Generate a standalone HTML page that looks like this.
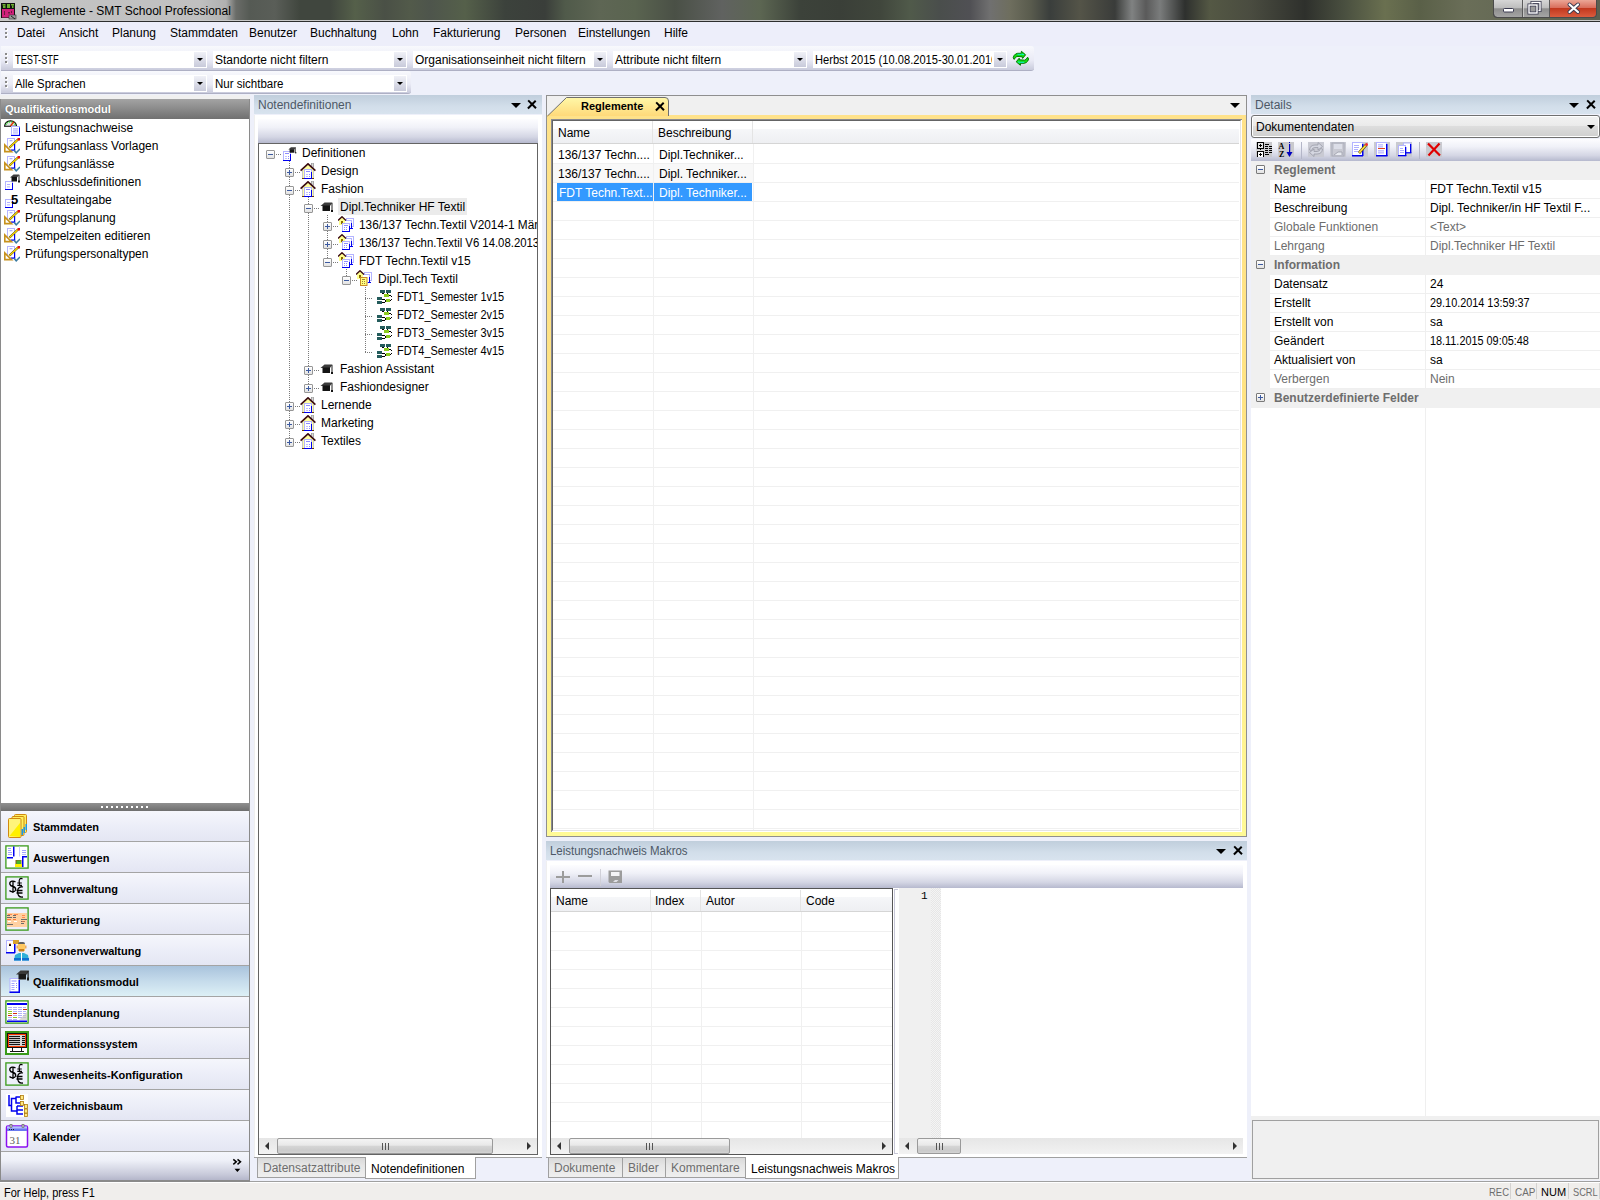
<!DOCTYPE html>
<html><head><meta charset="utf-8">
<style>
*{box-sizing:border-box;margin:0;padding:0}
html,body{width:1600px;height:1200px;overflow:hidden;background:#EEF0FA;font-family:"Liberation Sans",sans-serif;font-size:12px;color:#000}
.a{position:absolute}
.t{position:absolute;white-space:nowrap;line-height:14px}
.b{font-weight:bold}
.fx{transform-origin:0 0}
/* title */
#title{left:0;top:0;width:1600px;height:22px;background:linear-gradient(90deg,#c4c4c4 0px,#c0c0c0 200px,#b0b0b0 226px,#6a6c68 236px,#555a54 250px,#5a5e58 275px,#40463e 300px,#40463e 330px,#55604a 355px,#4a5046 385px,#525a4a 410px,#4e554c 430px,#55604a 465px,#3c423c 505px,#3a3e3a 545px,#505a4a 565px,#5e6654 600px,#5a6450 635px,#4a5046 675px,#606260 722px,#5c6652 760px,#3c423a 800px,#3a3f38 840px,#40463c 880px,#505a4a 910px,#4a4e4c 940px,#505054 970px,#707070 990px,#6e6e5e 1010px,#5a5c4e 1030px,#3a3e3c 1050px,#545448 1080px,#3a3c3a 1115px,#808282 1132px,#5a5a5a 1146px,#7a7c7c 1160px,#2e302e 1185px,#545844 1210px,#4a4c40 1250px,#2e302c 1305px,#4a5040 1345px,#6a7050 1385px,#5a6048 1420px,#6a6e58 1465px,#5a6050 1600px)}
#menu{left:0;top:22px;width:1600px;height:24px;background:#EDEEFA}
.grip{position:absolute;width:3px}
.grip i{display:block;width:2px;height:2px;background:#8a8a8a;margin-bottom:2px;box-shadow:1px 1px 0 #fff}
.tb{position:absolute;border-radius:0 3px 3px 0;background:linear-gradient(#F8F9FD,#E9EAF5 60%,#C9CBDC);border-bottom:1px solid #AEB0C4}
.combo{position:absolute;height:17px;background:#fff}
.combo .t{top:2px;left:2px}
.dd{position:absolute;right:1px;top:1px;width:12px;height:15px;background:linear-gradient(#F0F1F7,#C8CADA)}
.dd:after{content:"";position:absolute;left:3px;top:6px;border-left:3px solid transparent;border-right:3px solid transparent;border-top:3px solid #000}
.phdr{position:absolute;height:19px;background:linear-gradient(#C0CEDC,#D2DEEA 60%,#D8E3EE)}
.phdr .t{left:4px;top:3px;color:#4D5866}
.ptri{position:absolute;top:8px;border-left:5px solid transparent;border-right:5px solid transparent;border-top:5px solid #000}
.px{position:absolute;top:5px;width:9px;height:9px}
.px:before,.px:after{content:"";position:absolute;left:3.7px;top:-0.8px;width:1.6px;height:10.6px;background:#000;transform:rotate(45deg)}
.px:after{transform:rotate(-45deg)}
.ptb{position:absolute;background:linear-gradient(#FDFDFF,#F0F1F8 35%,#D4D6E4 75%,#B6B9CE)}
.box{position:absolute;background:#fff;border:1px solid #646464}
.hsb{position:absolute;height:16px;background:linear-gradient(#E6E6E6,#F2F2F2)}
.thumb{position:absolute;top:0;height:16px;border:1px solid #9A9A9A;border-radius:2px;background:linear-gradient(#F4F4F4,#E8E8E8 45%,#D6D6D6 50%,#CACACA 85%,#D4D4D4)}
.grip3{position:absolute;top:4px;width:7px;height:7px;border-left:1px solid #555;border-right:1px solid #555}
.grip3:after{content:"";position:absolute;left:2px;top:0;width:1px;height:7px;background:#555}
.la{position:absolute;top:4px;border-top:4px solid transparent;border-bottom:4px solid transparent;border-right:4px solid #333}
.ra{position:absolute;top:4px;border-top:4px solid transparent;border-bottom:4px solid transparent;border-left:4px solid #333}
.tab{position:absolute;height:20px;border:1px solid #A0A0A0;border-top:none;background:linear-gradient(#D9D9D9,#E6E6E6 40%,#EFEFEF);color:#6D6D6D}
.tab .t{top:3px;left:5px}
.tab.act{background:#fff;color:#000;height:22px}
.nav{position:absolute;left:1px;width:248px;height:31px;border-bottom:1px solid #A4A4A4;background:linear-gradient(#F5F6FC,#ECEEF8 50%,#E4E6F3)}
.nav .t{left:32px;top:9px;font-size:11px;font-weight:bold}
.nav.sel{background:linear-gradient(#A9C3DC,#C5DBEB 50%,#DDF0F6)}
.li{position:absolute;left:25px;height:18px}
.gline{position:absolute;background:#E8E8E8}
.exp{position:absolute;width:9px;height:9px;border:1px solid #969696;border-radius:1px;background:linear-gradient(#fff,#E2E2E2)}
.exp:before{content:"";position:absolute;left:1px;top:3px;width:5px;height:1px;background:#3C5AA0}
.exp.p:after{content:"";position:absolute;left:3px;top:1px;width:1px;height:5px;background:#3C5AA0}
.dot{position:absolute;border-color:#A0A0A0;border-style:dotted;border-width:0}
.prow{position:absolute;left:1270px;width:330px;height:19px;border-bottom:1px solid #EFEFEF;background:#fff}
.prow .n{position:absolute;left:4px;top:2px;white-space:nowrap}
.prow .v{position:absolute;left:160px;top:2px;white-space:nowrap}
.prow .d{color:#6D6D6D}
.pcat{position:absolute;left:1251px;width:349px;height:19px;background:#F0F0F0}
.pcat .t{left:23px;top:2px;color:#6D6D6D;font-weight:bold}
.pcat .exp{left:5px;top:4px;border-color:#7A7A7A}
</style></head><body><svg width="0" height="0" style="position:absolute"><defs>
<symbol id="house" viewBox="0 0 16 17">
 <polygon points="2,7 8,1.3 14,7 14,16 2,16" fill="#FFFFA0"/>
 <rect x="2" y="7" width="1" height="9" fill="#C8C8C8"/><rect x="13" y="7" width="1" height="9" fill="#C8C8C8"/>
 <rect x="11.5" y="0" width="2" height="4.5" fill="#D8D8D8" stroke="#8C8C8C" stroke-width="0.7"/>
 <polyline points="0.6,7.6 8,0.8 15.4,7.6" fill="none" stroke="#3A0A10" stroke-width="1.6"/>
 <rect x="2" y="15" width="2" height="1" fill="#6A3A00"/><rect x="12" y="15" width="2" height="1" fill="#6A3A00"/>
 <rect x="4.5" y="6.5" width="7" height="9" fill="#fff" stroke="#B4B4FF" stroke-width="1"/>
 <rect x="11" y="9" width="1" height="7" fill="#0000F0"/><rect x="4" y="15" width="8" height="1" fill="#0000F0"/>
 <rect x="6" y="8" width="4" height="1" fill="#8C8CFF"/><rect x="6" y="11" width="2" height="1" fill="#C0C0FF"/><rect x="9" y="11" width="1" height="1" fill="#8C8CFF"/>
 <rect x="6" y="13" width="2" height="1" fill="#C0C0FF"/><rect x="9" y="13" width="1" height="1" fill="#8C8CFF"/>
</symbol>
<symbol id="cap" viewBox="0 0 14 11">
 <path d="M0.5 4 L4.5 0.5 L12.5 0.5 L10 4 Z" fill="#3C3C3C"/>
 <rect x="2.5" y="3.5" width="7.5" height="5.5" fill="#141414"/>
 <rect x="11.5" y="1" width="1" height="7" fill="#1E1E1E"/><rect x="11" y="8" width="2" height="2" fill="#141414"/>
</symbol>
<symbol id="doc" viewBox="0 0 9 11">
 <rect x="0.5" y="0.5" width="7" height="9" fill="#fff" stroke="#B4B4FF" stroke-width="1"/>
 <rect x="7" y="3" width="1" height="7" fill="#0000F0"/><rect x="0" y="9" width="8" height="1" fill="#0000F0"/>
 <rect x="2" y="2" width="4" height="1" fill="#8C8CFF"/><rect x="2" y="5" width="2" height="1" fill="#C0C0FF"/><rect x="5" y="5" width="1" height="1" fill="#8C8CFF"/>
 <rect x="2" y="7" width="2" height="1" fill="#C0C0FF"/><rect x="5" y="7" width="1" height="1" fill="#8C8CFF"/>
</symbol>
<symbol id="multi" viewBox="0 0 17 17">
 <rect x="8.5" y="2.5" width="7" height="8" fill="#fff" stroke="#B4B4FF"/>
 <rect x="6.5" y="4.5" width="7" height="8" fill="#fff" stroke="#B4B4FF"/>
 <rect x="13" y="7" width="1" height="5" fill="#0000F0"/><rect x="11" y="12" width="4" height="1" fill="#0000F0"/>
 <polygon points="1,4 4,1 7,4 7,9 1,9" fill="#FFFF90"/>
 <polyline points="0,4.5 4,0.7 8,4.5" fill="none" stroke="#3A0A10" stroke-width="1.3"/>
 <rect x="3" y="5" width="2" height="3" fill="#8A6A00"/>
 <rect x="4.5" y="7.5" width="7" height="8" fill="#fff" stroke="#B4B4FF"/>
 <rect x="11" y="10" width="1" height="6" fill="#0000F0"/><rect x="4" y="15" width="8" height="1" fill="#0000F0"/>
 <rect x="6" y="9" width="4" height="1" fill="#8C8CFF"/><rect x="6" y="11" width="1" height="1" fill="#8C8CFF"/><rect x="8" y="11" width="1" height="1" fill="#8C8CFF"/>
 <rect x="6" y="13" width="1" height="1" fill="#8C8CFF"/><rect x="8" y="13" width="1" height="1" fill="#8C8CFF"/>
</symbol>
<symbol id="ydoc" viewBox="0 0 17 17">
 <rect x="8.5" y="2.5" width="7" height="8" fill="#fff" stroke="#B4B4FF"/>
 <rect x="6.5" y="4.5" width="7" height="8" fill="#fff" stroke="#B4B4FF"/>
 <rect x="13" y="7" width="1" height="5" fill="#0000F0"/><rect x="12" y="12" width="3" height="1" fill="#0000F0"/>
 <polygon points="1,4 4,1 7,4 7,9 1,9" fill="#FFFF90"/>
 <polyline points="0,4.5 4,0.7 8,4.5" fill="none" stroke="#3A0A10" stroke-width="1.3"/>
 <rect x="3" y="5" width="2" height="3" fill="#8A6A00"/>
 <rect x="4.5" y="7.5" width="6.5" height="8" fill="#FFFF80" stroke="#C88A28"/>
 <rect x="6" y="9" width="3" height="1" fill="#A08040"/><rect x="6" y="11" width="1" height="1" fill="#A08040"/><rect x="8" y="11" width="1" height="1" fill="#A08040"/>
 <rect x="6" y="13" width="1" height="1" fill="#A08040"/><rect x="8" y="13" width="1" height="1" fill="#A08040"/>
</symbol>
<symbol id="gtree" viewBox="0 0 16 15" shape-rendering="crispEdges">
 <rect x="3" y="0" width="5" height="3" fill="#235B5B"/><rect x="9" y="0" width="5" height="3" fill="#235B5B"/>
 <rect x="5" y="3" width="2" height="1" fill="#000"/><rect x="10" y="3" width="1" height="1" fill="#000"/>
 <rect x="7" y="4" width="5" height="3" fill="#8CCC1E"/>
 <rect x="12" y="5" width="2" height="1" fill="#000"/><rect x="14" y="6" width="1" height="1" fill="#000"/>
 <rect x="0" y="7" width="5" height="3" fill="#235B5B"/>
 <rect x="5" y="9" width="3" height="1" fill="#000"/><rect x="8" y="10" width="1" height="2" fill="#000"/>
 <rect x="9" y="9" width="4" height="3" fill="#8CCC1E"/>
 <rect x="13" y="10" width="1" height="1" fill="#000"/><rect x="14" y="9" width="1" height="1" fill="#000"/>
 <rect x="0" y="11" width="5" height="3" fill="#235B5B"/><rect x="5" y="12" width="3" height="1" fill="#000"/>
</symbol>

<symbol id="gauge" viewBox="0 0 16 16">
 <path d="M0.6 6.3 Q1 1 6.5 0.7 Q12 1 12.6 6.3 Z" fill="#E4E4E4" stroke="#000" stroke-width="1.1"/>
 <path d="M1.8 5 Q2.5 2 6.5 1.8 Q10.5 2 11.3 5" fill="none" stroke="#10D010" stroke-width="1.1" stroke-dasharray="1.2 1"/>
 <path d="M6.5 6 L9.8 1.8" stroke="#E03000" stroke-width="1.4"/>
 <rect x="7.5" y="6.5" width="8" height="8.5" fill="#fff" stroke="#B4B4FF"/>
 <rect x="15" y="7.5" width="1" height="8.5" fill="#0000F0"/><rect x="7" y="15" width="9" height="1" fill="#0000F0"/>
 <rect x="9" y="8.5" width="5" height="0.9" fill="#9C9CFF"/><rect x="9" y="10.5" width="5" height="0.9" fill="#9C9CFF"/><rect x="9" y="12.5" width="5" height="0.9" fill="#9C9CFF"/>
</symbol>
<symbol id="ruler" viewBox="0 0 16 16">
 <rect x="3.5" y="0.5" width="7" height="11.5" fill="#fff" stroke="#B4B4FF"/>
 <rect x="10" y="6" width="1.2" height="6.5" fill="#0000F0"/><rect x="7" y="11.5" width="4.2" height="1.2" fill="#0000F0"/>
 <rect x="5.5" y="2.3" width="3" height="0.9" fill="#8C8CFF"/>
 <polygon points="0,5 0,14.5 9.5,14.5" fill="#C8921E"/>
 <polygon points="1.6,9 1.6,12.8 5.4,12.8" fill="#fff"/>
 <path d="M5.5 9.5 L14 1.5" stroke="#4A3A10" stroke-width="2.2"/><path d="M5.8 9.2 L14 1.5" stroke="#FFE000" stroke-width="1.2"/>
 <rect x="13.5" y="0" width="2.5" height="2.5" fill="#E01010"/>
 <path d="M10 12.3 L12.2 14.8 L16 11" fill="none" stroke="#3A7AA0" stroke-width="1.5"/>
</symbol>
<symbol id="defcap" viewBox="0 0 16 16">
 <rect x="1.5" y="7.5" width="7" height="8" fill="#fff" stroke="#B4B4FF"/>
 <rect x="8" y="9" width="1" height="7" fill="#0000F0"/><rect x="1" y="15" width="8" height="1" fill="#0000F0"/>
 <rect x="3" y="10" width="3" height="0.8" fill="#9C9CFF"/><rect x="3" y="12.5" width="3" height="0.8" fill="#9C9CFF"/>
 <path d="M6 3.5 L9.5 0.5 L15.5 0.5 L13 3.5 Z" fill="#3C3C3C"/>
 <rect x="7.5" y="3" width="5.5" height="4.5" fill="#141414"/>
 <rect x="14.5" y="1" width="1" height="6" fill="#1E1E1E"/><rect x="14" y="6.5" width="2" height="2" fill="#141414"/>
</symbol>
<symbol id="five" viewBox="0 0 16 16">
 <rect x="1.5" y="7.5" width="7" height="8" fill="#fff" stroke="#B4B4FF"/>
 <rect x="8" y="9" width="1" height="7" fill="#0000F0"/><rect x="1" y="15" width="8" height="1" fill="#0000F0"/>
 <rect x="3" y="10" width="3" height="0.8" fill="#9C9CFF"/><rect x="3" y="12.5" width="3" height="0.8" fill="#9C9CFF"/>
 <text x="7" y="12" font-family="Liberation Sans" font-weight="bold" font-size="13" fill="#000">5</text>
</symbol>
<symbol id="nfold" viewBox="0 0 24 24">
 <rect x="9.5" y="0.5" width="12" height="18" rx="1" fill="#FFF060" stroke="#D08A10"/>
 <rect x="7" y="2.5" width="12" height="19" rx="1" fill="#FFF060" stroke="#D08A10"/>
 <rect x="3.5" y="4.5" width="12.5" height="19" rx="1" fill="#FFF47A" stroke="#D08A10"/>
 <path d="M4.5 22 L15 9 L15 23 Z" fill="#FFF000"/>
 <rect x="16.5" y="15" width="1.5" height="6" fill="#1E96E6"/><rect x="18.5" y="13" width="1.5" height="6" fill="#1E96E6"/><rect x="20.5" y="10" width="1.5" height="6" fill="#1E96E6"/>
</symbol>
<symbol id="nausw" viewBox="0 0 24 24">
 <rect x="0.9" y="0.9" width="22.2" height="22.2" fill="#fff" stroke="#3A9A1A" stroke-width="1.3"/>
 <rect x="8" y="1.5" width="1.5" height="10" fill="#0000F0"/><rect x="2" y="12" width="6" height="1.5" fill="#0000F0"/>
 <rect x="17" y="11" width="5" height="1.5" fill="#0000F0"/><rect x="17" y="12" width="1.5" height="10" fill="#0000F0"/>
 <rect x="14" y="1.5" width="1" height="10" fill="#C8C8FF"/>
 <rect x="3" y="3" width="3" height="0.8" fill="#8C8CFF"/><rect x="3" y="5" width="3" height="0.8" fill="#8C8CFF"/><rect x="3" y="7" width="4" height="0.8" fill="#8C8CFF"/><rect x="3" y="9" width="4" height="0.8" fill="#8C8CFF"/>
 <rect x="17" y="5" width="4" height="0.8" fill="#8C8CFF"/><rect x="17" y="7" width="4" height="0.8" fill="#8C8CFF"/><rect x="17" y="9" width="4" height="0.8" fill="#B0B0FF"/>
 <rect x="10.5" y="15" width="6" height="6" fill="#8A5A1E"/><rect x="11.5" y="15.5" width="4.5" height="3.5" fill="#48B428"/>
 <rect x="10" y="19" width="7" height="3" fill="#FFF000"/>
</symbol>
<symbol id="nlohn" viewBox="0 0 24 24">
 <rect x="0.9" y="0.9" width="22.2" height="22.2" fill="#EEF0FA" stroke="#3A9A1A" stroke-width="1.3"/>
 <path d="M8 4.5 L8 17 M10.5 6 Q9 4.8 7 5.2 Q4.5 5.8 4.8 8 Q5.2 10 8 10.5 Q11 11.3 10.6 13.8 Q10 16 7.5 15.8 Q5.5 15.7 4.5 14.5" fill="none" stroke="#000" stroke-width="1.3"/>
 <path d="M17.5 3 Q16 1.8 14.8 3 Q14 4 14.2 6 L14.5 9 M12.3 7 L16.8 7 M12.3 9.3 L17 9.3" fill="none" stroke="#000" stroke-width="1.2"/>
 <path d="M18 11 Q14.5 10 13 13 Q12 17 13.5 19.5 Q15 21.5 18 21 M11.5 14.5 L17.5 14.5 M11.5 17 L17.5 17" fill="none" stroke="#000" stroke-width="1.3"/>
</symbol>
<symbol id="nfakt" viewBox="0 0 24 24">
 <rect x="0.9" y="0.9" width="22.2" height="22.2" fill="#EEF0FA" stroke="#3A9A1A" stroke-width="1.3"/>
 <rect x="2" y="6" width="20" height="14" fill="#FFD0A0"/>
 <g fill="#6A6A6A"><rect x="2" y="8" width="3" height="1"/><rect x="2" y="10" width="5" height="1"/><rect x="8" y="8" width="3" height="1"/><rect x="8" y="10" width="3" height="1"/><rect x="16" y="12" width="6" height="1"/><rect x="2" y="17" width="6" height="1"/><rect x="16" y="14" width="4" height="1"/><rect x="16" y="16" width="3" height="1"/></g>
 <g fill="#FF7A3A"><rect x="3" y="7" width="4" height="0.8"/><rect x="9" y="7" width="4" height="0.8"/><rect x="17" y="8" width="3" height="0.8"/><rect x="17" y="10" width="3" height="0.8"/><rect x="2" y="12" width="4" height="1"/><rect x="8" y="12" width="3" height="1"/><rect x="17" y="14" width="3" height="0.6"/></g>
 <g fill="#fff"><rect x="3" y="14" width="3" height="1"/><rect x="9" y="14" width="3" height="1"/></g>
</symbol>
<symbol id="npers" viewBox="0 0 24 24">
 <rect x="1.5" y="2.5" width="8" height="12" fill="#fff" stroke="#B4B4FF"/>
 <rect x="9" y="3" width="1.5" height="12" fill="#0000F0"/><rect x="1" y="14" width="9" height="1.5" fill="#0000F0"/>
 <rect x="8" y="2" width="6" height="4" fill="#D8A030"/><rect x="4" y="6" width="2" height="2" fill="#000"/><rect x="4" y="5.5" width="2" height="0.8" fill="#FF6030"/>
 <rect x="13" y="4" width="7" height="4" fill="#606060" rx="2"/>
 <rect x="13" y="6" width="7" height="7" fill="#FFC860"/><rect x="11.5" y="7.5" width="1.5" height="3" fill="#E8A860"/><rect x="20" y="7.5" width="1.5" height="3" fill="#E8A860"/>
 <rect x="14" y="11" width="5" height="2.5" fill="#C88020"/>
 <path d="M9 22.5 L10 17 L14 15 L19 15 L23 17 L24 22.5 Z" fill="#30B0D8"/>
 <rect x="9" y="20" width="15" height="2.5" fill="#1070D0"/><rect x="16" y="15" width="1" height="8" fill="#fff"/>
</symbol>
<symbol id="nqual" viewBox="0 0 24 24">
 <rect x="5" y="9.5" width="9.5" height="13.5" fill="#fff" stroke="#B4B4FF"/>
 <rect x="13.5" y="11" width="1.5" height="12.5" fill="#0000F0"/><rect x="4.5" y="22.5" width="10.5" height="1.5" fill="#0000F0"/>
 <g fill="#8C8CFF"><rect x="6.5" y="11.5" width="5" height="1"/><rect x="6.5" y="14" width="3" height="0.8"/><rect x="6.5" y="16" width="3" height="0.8"/><rect x="6.5" y="18" width="3" height="0.8"/><rect x="6.5" y="20" width="3" height="0.8"/><rect x="11" y="14" width="1" height="1"/><rect x="11" y="16" width="1" height="1"/><rect x="11" y="18" width="1" height="1"/></g>
 <path d="M11 5.5 L15.5 1.5 L24 1.5 L22 5.5 Z" fill="#3A3A3A"/>
 <rect x="13.5" y="5" width="7.5" height="5.5" fill="#1A1A1A"/>
 <rect x="22.5" y="2" width="1.2" height="8" fill="#1A1A1A"/><rect x="22" y="8.5" width="2" height="3" fill="#1A1A1A"/>
</symbol>
<symbol id="nstund" viewBox="0 0 24 24">
 <rect x="0.9" y="0.9" width="22.2" height="22.2" fill="#fff" stroke="#3A9A1A" stroke-width="1.3"/>
 <rect x="2" y="3" width="20" height="2" fill="#0000F0"/><rect x="2" y="20.5" width="20" height="1.5" fill="#0000F0"/>
 <g fill="#B0B0F8"><rect x="3" y="7" width="4" height="1"/><rect x="8" y="7" width="4" height="1"/><rect x="13" y="7" width="4" height="1"/><rect x="18" y="7" width="3" height="1"/><rect x="3" y="9" width="4" height="1"/><rect x="8" y="9" width="4" height="1"/><rect x="13" y="9" width="4" height="1"/><rect x="8" y="11" width="4" height="1"/><rect x="13" y="11" width="4" height="1"/><rect x="18" y="11" width="3" height="1"/><rect x="13" y="13" width="4" height="1"/><rect x="18" y="13" width="3" height="1"/><rect x="8" y="15" width="4" height="1"/><rect x="13" y="15" width="4" height="1"/><rect x="18" y="15" width="3" height="1"/><rect x="3" y="17" width="4" height="1"/><rect x="3" y="19" width="4" height="1"/><rect x="8" y="19" width="4" height="1"/><rect x="13" y="17" width="4" height="1"/><rect x="18" y="17" width="3" height="1"/></g>
 <g fill="#90C820"><rect x="3" y="11" width="4" height="1"/><rect x="3" y="13" width="4" height="1"/><rect x="8" y="17" width="4" height="1"/></g>
 <g fill="#D03010"><rect x="18" y="9" width="4" height="1"/><rect x="8" y="13" width="4" height="1"/><rect x="3" y="15" width="4" height="1"/></g>
 <path d="M14 20 L22 12 L22 20 Z" fill="#C8C8C0" opacity="0.7"/>
</symbol>
<symbol id="ninfo" viewBox="0 0 24 24" shape-rendering="crispEdges">
 <rect x="0.9" y="0.9" width="22.2" height="22.2" fill="#fff" stroke="#3A9A1A" stroke-width="1.3"/>
 <rect x="2" y="2" width="20" height="15" fill="#141414"/>
 <rect x="3" y="3" width="18" height="13" fill="#FF3A00"/>
 <rect x="4" y="4" width="16" height="11" fill="#C8C8C8"/>
 <g fill="#141414"><rect x="4" y="5" width="16" height="1"/><rect x="4" y="7" width="16" height="1"/><rect x="4" y="9" width="16" height="1"/><rect x="4" y="11" width="16" height="1"/><rect x="4" y="13" width="16" height="1"/></g>
 <rect x="15" y="4" width="2" height="11" fill="#D8D8D8"/>
 <rect x="7" y="17" width="1" height="4" fill="#141414"/><rect x="16" y="17" width="1" height="4" fill="#141414"/><rect x="5" y="20" width="14" height="1" fill="#141414"/>
</symbol>
<symbol id="nverz" viewBox="0 0 24 24">
 <rect x="1" y="1" width="22" height="23" fill="#fff"/>
 <path d="M4 2 L4 12.5 L7 12.5 M6.5 12 L6.5 5.5 L11 5.5 M11 3.5 L11 10 L15 10 M11 4 L15 4 M6.5 9 L6.5 18 L12 18 M12 13 L12 21 L18 21 M12 13 L18 13 M12 17 L18 17" fill="none" stroke="#0000F0" stroke-width="1.5"/>
 <g fill="#FFE880" stroke="#B07A10" stroke-width="0.8"><rect x="15.5" y="2.5" width="3" height="4"/><rect x="15.5" y="8.5" width="3" height="4"/><rect x="19.5" y="11.5" width="3" height="4"/><rect x="19.5" y="16" width="3" height="4"/><rect x="19.5" y="20.5" width="3" height="3"/></g>
</symbol>
<symbol id="nkal" viewBox="0 0 24 24">
 <rect x="1.5" y="2" width="21" height="21" rx="1.5" fill="#fff" stroke="#8A10F0" stroke-width="1.5"/>
 <rect x="2" y="2.5" width="20" height="4.5" fill="#6A7AF0"/><rect x="2" y="2.5" width="20" height="2" fill="#B8C0FF"/>
 <rect x="5" y="0.5" width="2" height="3" fill="#C8C8C8" stroke="#444" stroke-width="0.5"/><rect x="17" y="0.5" width="2" height="3" fill="#C8C8C8" stroke="#444" stroke-width="0.5"/>
 <g fill="#222"><rect x="4" y="5" width="1" height="1"/><rect x="6" y="5" width="1" height="1"/><rect x="8" y="5" width="1" height="1"/></g>
 <text x="4.5" y="19.5" font-family="Liberation Serif" font-size="11" fill="#606060">31</text>
</symbol>
<symbol id="tcat" viewBox="0 0 16 16" shape-rendering="crispEdges">
 <rect x="0" y="0" width="16" height="15" fill="#C9C9CD"/>
 <rect x="1" y="0" width="7" height="7" fill="#000"/><rect x="2" y="1" width="5" height="5" fill="#E4E4E4"/>
 <rect x="3" y="3" width="3" height="1" fill="#000"/><rect x="4" y="2" width="1" height="3" fill="#000"/>
 <rect x="4" y="7" width="1" height="2" fill="#000"/><rect x="0" y="8" width="9" height="1" fill="#DADADA"/>
 <rect x="1" y="9" width="7" height="6" fill="#000"/><rect x="2" y="10" width="5" height="5" fill="#fff"/>
 <rect x="3" y="12" width="3" height="1" fill="#000"/><rect x="4" y="11" width="1" height="3" fill="#000"/>
 <g fill="#000"><rect x="9" y="2" width="4" height="1"/><rect x="9" y="4" width="3" height="1"/><rect x="13" y="4" width="3" height="1"/><rect x="9" y="6" width="3" height="1"/><rect x="13" y="6" width="3" height="1"/><rect x="9" y="8" width="3" height="1"/><rect x="13" y="8" width="3" height="1"/><rect x="9" y="10" width="3" height="1"/><rect x="13" y="10" width="3" height="1"/><rect x="9" y="12" width="4" height="1"/></g>
</symbol>
<symbol id="taz" viewBox="0 0 16 16">
 <rect x="0" y="0" width="16" height="15" fill="#C9C9CD"/>
 <text x="0.5" y="7" font-family="Liberation Serif" font-weight="bold" font-size="8" fill="#000">A</text>
 <text x="1" y="14.5" font-family="Liberation Serif" font-weight="bold" font-size="8" fill="#000">Z</text>
 <rect x="11" y="0" width="1" height="1" fill="#0000C0"/><rect x="11" y="2" width="1.2" height="10" fill="#0000C0"/>
 <path d="M8.5 10 L14.5 10 L11.5 15 Z" fill="#0000C0"/>
</symbol>
<symbol id="trefr" viewBox="0 0 16 16">
 <rect x="0" y="0" width="16" height="15" fill="#C9CAD3"/>
 <path d="M1.5 8 Q2 3 7 3 L10 3 L10 0.5 L14.5 4.5 L10 8 L10 5.5 L7 5.5 Q4 5.5 3.5 8.5 Z" fill="#D4D6E0" stroke="#9A9CA8" stroke-width="0.8"/>
 <path d="M14.5 7 Q14 12 9 12 L6 12 L6 14.5 L1.5 10.5 L6 7 L6 9.5 L9 9.5 Q12 9.5 12.5 6.5 Z" fill="#D4D6E0" stroke="#9A9CA8" stroke-width="0.8"/>
</symbol>
<symbol id="tsave" viewBox="0 0 16 16">
 <rect x="0" y="0" width="16" height="15" fill="#C9CAD3"/>
 <rect x="2" y="1" width="12" height="13" fill="none" stroke="#A8AAB8"/>
 <rect x="4" y="2" width="8" height="5" fill="#DCDEE8"/>
 <path d="M4 13 L8 10 L12 10 L12 13" fill="#E8EAF0" stroke="#9A9CA8" stroke-width="0.8"/>
</symbol>
<symbol id="tedit" viewBox="0 0 16 16">
 <rect x="0" y="0" width="16" height="15" fill="#C9CAD0"/>
 <rect x="0.5" y="0.5" width="10" height="13" fill="#fff" stroke="#B4B4FF"/>
 <rect x="10" y="2" width="1.5" height="12" fill="#0000F0"/><rect x="0" y="13" width="11" height="1.5" fill="#0000F0"/>
 <g fill="#9C9CFF"><rect x="2" y="3" width="5" height="0.8"/><rect x="2" y="5" width="5" height="0.8"/><rect x="2" y="7" width="4" height="0.8"/><rect x="2" y="9" width="4" height="0.8"/></g>
 <path d="M7 11 L14 3" stroke="#5A4A10" stroke-width="2.8"/><path d="M7.3 10.6 L14 3" stroke="#FFE040" stroke-width="1.6"/>
 <circle cx="14.5" cy="2.5" r="1.5" fill="#F03030"/>
</symbol>
<symbol id="tdoc" viewBox="0 0 16 16">
 <rect x="0" y="0" width="16" height="15" fill="#C9CAD0"/>
 <rect x="2.5" y="0.5" width="10" height="13" fill="#fff" stroke="#B4B4FF"/>
 <rect x="12" y="2" width="1.5" height="12" fill="#0000F0"/><rect x="2" y="13" width="11.5" height="1.5" fill="#0000F0"/>
 <g fill="#8C8CFF"><rect x="4" y="2.5" width="5" height="0.8"/><rect x="4" y="4.5" width="5" height="0.8"/><rect x="4" y="8.5" width="6" height="0.8"/><rect x="4" y="10.5" width="6" height="0.8"/></g>
 <rect x="4" y="6" width="7" height="1" fill="#E04020"/>
</symbol>
<symbol id="tcopy" viewBox="0 0 16 16">
 <rect x="0" y="0" width="16" height="15" fill="#C9CAD0"/>
 <rect x="7.5" y="1" width="7" height="9.5" fill="#fff" stroke="#B4B4FF"/>
 <rect x="14" y="2" width="1.3" height="9" fill="#0000F0"/><rect x="10" y="10.2" width="5.3" height="1.2" fill="#0000F0"/>
 <rect x="2.5" y="3.5" width="7" height="10" fill="#fff" stroke="#B4B4FF"/>
 <rect x="9" y="5" width="1.3" height="9" fill="#0000F0"/><rect x="2" y="13" width="8.3" height="1.3" fill="#0000F0"/>
 <g fill="#9C9CFF"><rect x="4" y="6" width="3" height="0.8"/><rect x="4" y="8" width="4" height="0.8"/><rect x="4" y="10" width="4" height="0.8"/></g>
</symbol>
<symbol id="tx" viewBox="0 0 16 16">
 <rect x="0" y="0" width="16" height="15" fill="#C9CAD0"/>
 <path d="M2 1.5 L14 13.5 M13.5 1.5 L2.5 13.5" stroke="#E00000" stroke-width="2.2"/>
</symbol>
</defs></svg>

<!-- TITLE BAR -->
<div id="title" class="a"></div>
<div class="a" style="left:0;top:20px;width:1600px;height:1px;background:#C8C8C8"></div>
<div class="a" style="left:0;top:21px;width:1600px;height:1px;background:#2E2E2E"></div>
<svg class="a" style="left:0;top:2px" width="18" height="18" viewBox="0 0 18 18"><rect x="1" y="1" width="14" height="15" fill="#111"/>
<g fill="#6CB030"><rect x="2.5" y="2" width="3" height="1.5"/><rect x="3" y="3.5" width="2.5" height="2.5"/><rect x="7" y="2" width="3" height="4"/><rect x="11" y="2" width="3" height="1.5"/><rect x="12" y="3.5" width="1.5" height="2.5"/></g>
<rect x="2" y="7" width="12" height="8.5" fill="#D0207A"/><g fill="#6A1A40"><rect x="4" y="9" width="1" height="4"/><rect x="8" y="10" width="2" height="1.5"/><rect x="11" y="9" width="1" height="2"/></g>
<rect x="9" y="13" width="7" height="4" fill="#9A9A9A" stroke="#333" stroke-width="0.6"/><path d="M11 14 L15 17" stroke="#222" stroke-width="1"/></svg>
<div class="t" style="left:21px;top:4px;color:#000">Reglemente - SMT School Professional</div>
<!-- window buttons -->
<svg class="a" style="left:1493px;top:0" width="105" height="19" viewBox="0 0 105 19">
 <defs>
  <linearGradient id="wg" x1="0" y1="0" x2="0" y2="1"><stop offset="0" stop-color="#D6D6D6"/><stop offset="0.45" stop-color="#BDBDBD"/><stop offset="0.5" stop-color="#8E8E8E"/><stop offset="1" stop-color="#A6A6A6"/></linearGradient>
  <linearGradient id="wr" x1="0" y1="0" x2="0" y2="1"><stop offset="0" stop-color="#EBA696"/><stop offset="0.45" stop-color="#D96E5C"/><stop offset="0.5" stop-color="#C2381E"/><stop offset="1" stop-color="#DA5C3E"/></linearGradient>
 </defs>
 <path d="M0.5 0 L0.5 14 Q0.5 17.5 4 17.5 L100 17.5 Q103.5 17.5 103.5 14 L103.5 0" fill="url(#wg)" stroke="#4A4A4A"/>
 <path d="M56.5 0 L56.5 17 L100 17 Q103 17 103 14 L103 0 Z" fill="url(#wr)"/>
 <path d="M0.5 0 L0.5 14 Q0.5 17.5 4 17.5 L100 17.5 Q103.5 17.5 103.5 14 L103.5 0" fill="none" stroke="#4A4A4A"/>
 <rect x="29" y="0" width="1" height="17" fill="#5A5A5A"/><rect x="30" y="0" width="1" height="17" fill="#E0E0E0" opacity="0.6"/>
 <rect x="56" y="0" width="1" height="17" fill="#5A5A5A"/>
 <rect x="10.5" y="8.5" width="10" height="3.5" rx="1" fill="#fff" stroke="#3A3A50" stroke-width="1"/>
 <rect x="39" y="2.5" width="8" height="8" fill="none" stroke="#3A3A50" stroke-width="3"/><rect x="39" y="2.5" width="8" height="8" fill="none" stroke="#fff" stroke-width="1.4"/>
 <rect x="36" y="5" width="8" height="8" fill="#9A9A9A" stroke="#3A3A50" stroke-width="3"/><rect x="36" y="5" width="8" height="8" fill="none" stroke="#fff" stroke-width="1.4"/>
 <path d="M76.5 4.5 L85 12 M85 4.5 L76.5 12" stroke="#3A3A50" stroke-width="4" stroke-linecap="round"/>
 <path d="M76.5 4.5 L85 12 M85 4.5 L76.5 12" stroke="#fff" stroke-width="2.2" stroke-linecap="round"/>
</svg>

<!-- MENU -->
<div id="menu" class="a"></div>
<div class="grip a" style="left:5px;top:28px"><i></i><i></i><i></i></div>
<div class="t" style="left:17px;top:26px">Datei</div>
<div class="t" style="left:59px;top:26px">Ansicht</div>
<div class="t" style="left:112px;top:26px">Planung</div>
<div class="t" style="left:170px;top:26px">Stammdaten</div>
<div class="t" style="left:249px;top:26px">Benutzer</div>
<div class="t" style="left:310px;top:26px">Buchhaltung</div>
<div class="t" style="left:392px;top:26px">Lohn</div>
<div class="t" style="left:433px;top:26px">Fakturierung</div>
<div class="t" style="left:515px;top:26px">Personen</div>
<div class="t" style="left:578px;top:26px">Einstellungen</div>
<div class="t" style="left:664px;top:26px">Hilfe</div>

<!-- TOOLBAR 1 -->
<div class="tb" style="left:1px;top:46px;width:1033px;height:25px"></div>
<div class="grip a" style="left:5px;top:53px"><i></i><i></i><i></i></div>
<div class="combo" style="left:13px;top:51px;width:194px"><div class="t fx" style="transform:scaleX(0.77)">TEST-STF</div><div class="dd"></div></div>
<div class="combo" style="left:213px;top:51px;width:194px"><div class="t">Standorte nicht filtern</div><div class="dd"></div></div>
<div class="combo" style="left:413px;top:51px;width:194px"><div class="t">Organisationseinheit nicht filtern</div><div class="dd"></div></div>
<div class="combo" style="left:613px;top:51px;width:194px"><div class="t">Attribute nicht filtern</div><div class="dd"></div></div>
<div class="combo" style="left:813px;top:51px;width:194px"><div class="a" style="left:0;top:0;width:179px;height:17px;overflow:hidden"><div class="t fx" style="transform:scaleX(0.926)">Herbst 2015 (10.08.2015-30.01.2016)</div></div><div class="dd"></div></div>
<svg class="a" style="left:1012px;top:50px" width="18" height="18" viewBox="0 0 18 18"><g id="rf"><path d="M1.2 7.8 L2 5.6 L3.6 4 L5.6 3.3 L9.2 3.3 L9.4 1.3 L13.6 4.8 L10.6 8.4 L10.2 6.8 L5 6.4 L3.4 7.6 L2.2 9.4 Z" fill="#10E010" stroke="#007800" stroke-width="1" stroke-linejoin="round"/><path d="M5.5 4.3 L9.5 4.3 L12 4.6" stroke="#10F0F0" stroke-width="0.9" fill="none"/></g><use href="#rf" transform="rotate(180 8.9 8.3)"/></svg>

<!-- TOOLBAR 2 -->
<div class="tb" style="left:1px;top:71px;width:410px;height:23px"></div>
<div class="grip a" style="left:5px;top:77px"><i></i><i></i><i></i></div>
<div class="combo" style="left:13px;top:75px;width:194px"><div class="t fx" style="transform:scaleX(0.946)">Alle Sprachen</div><div class="dd"></div></div>
<div class="combo" style="left:213px;top:75px;width:194px"><div class="t fx" style="transform:scaleX(0.96)">Nur sichtbare</div><div class="dd"></div></div>

<!-- main area bg strip -->
<div class="a" style="left:0;top:95px;width:250px;height:4px;background:#F0F0F0"></div>

<!-- LEFT PANEL -->
<div class="a" style="left:0;top:99px;width:250px;height:1081px;border-left:1px solid #8A8A8A;border-right:1px solid #8A8A8A;background:#fff"></div>
<div class="a" style="left:1px;top:99px;width:248px;height:20px;background:linear-gradient(#A3A3A3,#8A8A8A 50%,#707070)"></div>
<div class="t b" style="left:5px;top:102px;color:#fff;font-size:11px;text-shadow:0 0 1px #555">Qualifikationsmodul</div>
<svg class="a" style="left:4px;top:120px" width="16" height="16"><use href="#gauge" width="16" height="16"/></svg><svg class="a" style="left:4px;top:138px" width="16" height="16"><use href="#ruler" width="16" height="16"/></svg><svg class="a" style="left:4px;top:156px" width="16" height="16"><use href="#ruler" width="16" height="16"/></svg><svg class="a" style="left:4px;top:174px" width="16" height="16"><use href="#defcap" width="16" height="16"/></svg><svg class="a" style="left:4px;top:192px" width="16" height="16"><use href="#five" width="16" height="16"/></svg><svg class="a" style="left:4px;top:210px" width="16" height="16"><use href="#ruler" width="16" height="16"/></svg><svg class="a" style="left:4px;top:228px" width="16" height="16"><use href="#ruler" width="16" height="16"/></svg><svg class="a" style="left:4px;top:246px" width="16" height="16"><use href="#ruler" width="16" height="16"/></svg>
<div class="t" style="left:25px;top:121px">Leistungsnachweise</div>
<div class="t" style="left:25px;top:139px">Prüfungsanlass Vorlagen</div>
<div class="t" style="left:25px;top:157px">Prüfungsanlässe</div>
<div class="t" style="left:25px;top:175px">Abschlussdefinitionen</div>
<div class="t" style="left:25px;top:193px">Resultateingabe</div>
<div class="t" style="left:25px;top:211px">Prüfungsplanung</div>
<div class="t" style="left:25px;top:229px">Stempelzeiten editieren</div>
<div class="t" style="left:25px;top:247px">Prüfungspersonaltypen</div>

<!-- splitter -->
<div class="a" style="left:1px;top:803px;width:248px;height:8px;background:linear-gradient(#909090,#6E6E6E)"></div>
<div class="a" style="left:101px;top:806px;width:50px;height:2px;background:repeating-linear-gradient(90deg,#fff 0 2px,transparent 2px 5px)"></div>

<!-- nav buttons -->
<div class="nav" style="top:811px"><div class="t">Stammdaten</div></div>
<div class="nav" style="top:842px"><div class="t">Auswertungen</div></div>
<div class="nav" style="top:873px"><div class="t">Lohnverwaltung</div></div>
<div class="nav" style="top:904px"><div class="t">Fakturierung</div></div>
<div class="nav" style="top:935px"><div class="t">Personenverwaltung</div></div>
<div class="nav sel" style="top:966px"><div class="t">Qualifikationsmodul</div></div>
<div class="nav" style="top:997px"><div class="t">Stundenplanung</div></div>
<div class="nav" style="top:1028px"><div class="t">Informationssystem</div></div>
<div class="nav" style="top:1059px"><div class="t">Anwesenheits-Konfiguration</div></div>
<div class="nav" style="top:1090px"><div class="t">Verzeichnisbaum</div></div>
<div class="nav" style="top:1121px"><div class="t">Kalender</div></div>
<div class="a" style="left:1px;top:1152px;width:248px;height:28px;background:linear-gradient(#F4F6FC,#EEF0F8 30%,#C8CADA 80%,#B4B6CA)"></div>
<div class="a" style="left:0;top:1180px;width:250px;height:2px;background:#8A8A8A"></div>
<svg class="a" style="left:230px;top:1156px" width="14" height="18" viewBox="0 0 14 18"><path d="M3.3 3.3 L6.3 5.8 L3.3 8.3 M7.5 3.3 L10.5 5.8 L7.5 8.3" fill="none" stroke="#000" stroke-width="1.5"/><path d="M4.5 12.7 L10.3 12.7 L7.4 16 Z" fill="#000"/></svg>

<!-- NOTENDEFINITIONEN PANEL -->
<div class="phdr" style="left:254px;top:95px;width:288px"><div class="t">Notendefinitionen</div><div class="ptri" style="left:257px"></div><div class="px" style="left:273px"></div></div>
<div class="a" style="left:254px;top:114px;width:288px;height:1043px;background:#fff;border-left:1px solid #EFEFEF"></div>
<div class="a" style="left:254px;top:114px;width:288px;height:1px;background:#EEF0FA"></div>
<div class="ptb" style="left:258px;top:119px;width:280px;height:24px"></div>
<div class="box" style="left:258px;top:143px;width:280px;height:1012px"></div>
<div class="a" style="left:259px;top:144px;width:278px;height:994px;overflow:hidden"><div class="a" style="left:-259px;top:-144px;width:1600px;height:1200px"><div class="a" style="left:289px;top:161px;width:1px;height:282px;background:repeating-linear-gradient(#7A7A7A 0 1px,transparent 1px 2px)"></div><div class="a" style="left:308px;top:197px;width:1px;height:192px;background:repeating-linear-gradient(#7A7A7A 0 1px,transparent 1px 2px)"></div><div class="a" style="left:327px;top:215px;width:1px;height:48px;background:repeating-linear-gradient(#7A7A7A 0 1px,transparent 1px 2px)"></div><div class="a" style="left:346px;top:269px;width:1px;height:12px;background:repeating-linear-gradient(#7A7A7A 0 1px,transparent 1px 2px)"></div><div class="a" style="left:365px;top:287px;width:1px;height:66px;background:repeating-linear-gradient(#7A7A7A 0 1px,transparent 1px 2px)"></div><div class="a" style="left:276px;top:154px;width:6px;height:1px;background:repeating-linear-gradient(90deg,#7A7A7A 0 1px,transparent 1px 2px)"></div><div class="exp" style="left:266px;top:150px"></div><svg class="a" style="left:283px;top:151px" width="9" height="11"><use href="#doc" width="9" height="11"/></svg><svg class="a" style="left:288px;top:147px" width="9" height="7"><use href="#cap" width="9" height="7"/></svg><div class="t" style="left:302px;top:146px">Definitionen</div><div class="a" style="left:295px;top:172px;width:6px;height:1px;background:repeating-linear-gradient(90deg,#7A7A7A 0 1px,transparent 1px 2px)"></div><div class="exp p" style="left:285px;top:168px"></div><svg class="a" style="left:300px;top:163px" width="16" height="17"><use href="#house" width="16" height="17"/></svg><div class="t" style="left:321px;top:164px">Design</div><div class="a" style="left:295px;top:190px;width:6px;height:1px;background:repeating-linear-gradient(90deg,#7A7A7A 0 1px,transparent 1px 2px)"></div><div class="exp" style="left:285px;top:186px"></div><svg class="a" style="left:300px;top:181px" width="16" height="17"><use href="#house" width="16" height="17"/></svg><div class="t" style="left:321px;top:182px">Fashion</div><div class="a" style="left:314px;top:208px;width:6px;height:1px;background:repeating-linear-gradient(90deg,#7A7A7A 0 1px,transparent 1px 2px)"></div><div class="exp" style="left:304px;top:204px"></div><svg class="a" style="left:320px;top:202px" width="14" height="11"><use href="#cap" width="14" height="11"/></svg><div class="a" style="left:338px;top:198px;width:129px;height:17px;background:#EBEBEB"></div><div class="t" style="left:340px;top:200px">Dipl.Techniker HF Textil</div><div class="a" style="left:333px;top:226px;width:6px;height:1px;background:repeating-linear-gradient(90deg,#7A7A7A 0 1px,transparent 1px 2px)"></div><div class="exp p" style="left:323px;top:222px"></div><svg class="a" style="left:338px;top:216px" width="17" height="17"><use href="#multi" width="17" height="17"/></svg><div class="t" style="left:359px;top:218px;transform:scaleX(0.985);transform-origin:0 0">136/137 Techn.Textil V2014-1 März 2014</div><div class="a" style="left:333px;top:244px;width:6px;height:1px;background:repeating-linear-gradient(90deg,#7A7A7A 0 1px,transparent 1px 2px)"></div><div class="exp p" style="left:323px;top:240px"></div><svg class="a" style="left:338px;top:234px" width="17" height="17"><use href="#multi" width="17" height="17"/></svg><div class="t" style="left:359px;top:236px;transform:scaleX(0.945);transform-origin:0 0">136/137 Techn.Textil V6 14.08.2013</div><div class="a" style="left:333px;top:262px;width:6px;height:1px;background:repeating-linear-gradient(90deg,#7A7A7A 0 1px,transparent 1px 2px)"></div><div class="exp" style="left:323px;top:258px"></div><svg class="a" style="left:338px;top:252px" width="17" height="17"><use href="#multi" width="17" height="17"/></svg><div class="t" style="left:359px;top:254px">FDT Techn.Textil v15</div><div class="a" style="left:352px;top:280px;width:6px;height:1px;background:repeating-linear-gradient(90deg,#7A7A7A 0 1px,transparent 1px 2px)"></div><div class="exp" style="left:342px;top:276px"></div><svg class="a" style="left:356px;top:270px" width="17" height="17"><use href="#ydoc" width="17" height="17"/></svg><div class="t" style="left:378px;top:272px">Dipl.Tech Textil</div><div class="a" style="left:365px;top:298px;width:7px;height:1px;background:repeating-linear-gradient(90deg,#7A7A7A 0 1px,transparent 1px 2px)"></div><svg class="a" style="left:377px;top:290px" width="16" height="15"><use href="#gtree" width="16" height="15"/></svg><div class="t" style="left:397px;top:290px;transform:scaleX(0.913);transform-origin:0 0">FDT1_Semester 1v15</div><div class="a" style="left:365px;top:316px;width:7px;height:1px;background:repeating-linear-gradient(90deg,#7A7A7A 0 1px,transparent 1px 2px)"></div><svg class="a" style="left:377px;top:308px" width="16" height="15"><use href="#gtree" width="16" height="15"/></svg><div class="t" style="left:397px;top:308px;transform:scaleX(0.913);transform-origin:0 0">FDT2_Semester 2v15</div><div class="a" style="left:365px;top:334px;width:7px;height:1px;background:repeating-linear-gradient(90deg,#7A7A7A 0 1px,transparent 1px 2px)"></div><svg class="a" style="left:377px;top:326px" width="16" height="15"><use href="#gtree" width="16" height="15"/></svg><div class="t" style="left:397px;top:326px;transform:scaleX(0.913);transform-origin:0 0">FDT3_Semester 3v15</div><div class="a" style="left:365px;top:352px;width:7px;height:1px;background:repeating-linear-gradient(90deg,#7A7A7A 0 1px,transparent 1px 2px)"></div><svg class="a" style="left:377px;top:344px" width="16" height="15"><use href="#gtree" width="16" height="15"/></svg><div class="t" style="left:397px;top:344px;transform:scaleX(0.913);transform-origin:0 0">FDT4_Semester 4v15</div><div class="a" style="left:314px;top:370px;width:6px;height:1px;background:repeating-linear-gradient(90deg,#7A7A7A 0 1px,transparent 1px 2px)"></div><div class="exp p" style="left:304px;top:366px"></div><svg class="a" style="left:320px;top:364px" width="14" height="11"><use href="#cap" width="14" height="11"/></svg><div class="t" style="left:340px;top:362px">Fashion Assistant</div><div class="a" style="left:314px;top:388px;width:6px;height:1px;background:repeating-linear-gradient(90deg,#7A7A7A 0 1px,transparent 1px 2px)"></div><div class="exp p" style="left:304px;top:384px"></div><svg class="a" style="left:320px;top:382px" width="14" height="11"><use href="#cap" width="14" height="11"/></svg><div class="t" style="left:340px;top:380px">Fashiondesigner</div><div class="a" style="left:295px;top:406px;width:6px;height:1px;background:repeating-linear-gradient(90deg,#7A7A7A 0 1px,transparent 1px 2px)"></div><div class="exp p" style="left:285px;top:402px"></div><svg class="a" style="left:300px;top:397px" width="16" height="17"><use href="#house" width="16" height="17"/></svg><div class="t" style="left:321px;top:398px">Lernende</div><div class="a" style="left:295px;top:424px;width:6px;height:1px;background:repeating-linear-gradient(90deg,#7A7A7A 0 1px,transparent 1px 2px)"></div><div class="exp p" style="left:285px;top:420px"></div><svg class="a" style="left:300px;top:415px" width="16" height="17"><use href="#house" width="16" height="17"/></svg><div class="t" style="left:321px;top:416px">Marketing</div><div class="a" style="left:295px;top:442px;width:6px;height:1px;background:repeating-linear-gradient(90deg,#7A7A7A 0 1px,transparent 1px 2px)"></div><div class="exp p" style="left:285px;top:438px"></div><svg class="a" style="left:300px;top:433px" width="16" height="17"><use href="#house" width="16" height="17"/></svg><div class="t" style="left:321px;top:434px">Textiles</div></div></div>
<div class="hsb" style="left:259px;top:1138px;width:278px"><div class="la" style="left:6px"></div><div class="thumb" style="left:18px;width:216px"><div class="grip3" style="left:104px"></div></div><div class="ra" style="left:268px"></div></div>
<div class="a" style="left:254px;top:1157px;width:288px;height:1px;background:#A0A0A0"></div>
<div class="tab" style="left:257px;top:1158px;width:109px"><div class="t">Datensatzattribute</div></div>
<div class="tab act" style="left:365px;top:1157px;width:111px;border-top:none"><div class="t" style="top:5px">Notendefinitionen</div></div>

<!-- DOC AREA -->
<div class="a" style="left:546px;top:95px;width:701px;height:742px;background:#F0F0F0;border:1px solid #8F8F8F"></div>
<div class="ptri" style="left:1230px;top:103px"></div>
<div class="a" style="left:547px;top:115px;width:699px;height:721px;background:linear-gradient(#FFE28A,#FFE384 40%,#FFF090 80%,#FFFA96)"></div>
<svg class="a" style="left:547px;top:96px" width="124" height="21" viewBox="0 0 124 21"><defs><linearGradient id="tg" x1="0" y1="0" x2="0" y2="1"><stop offset="0" stop-color="#FFF8A8"/><stop offset="1" stop-color="#FFD97A"/></linearGradient></defs><path d="M0.5 20 L19.5 1.5 L118 1.5 Q121.5 1.5 121.5 5 L121.5 20" fill="url(#tg)" stroke="#6F6F6F" stroke-width="1"/></svg>
<div class="t b" style="left:581px;top:99px;font-size:11px">Reglemente</div>
<div class="px" style="left:655px;top:102px"></div>
<div class="a" style="left:551px;top:119px;width:691px;height:713px;background:#fff;border-left:1px solid #8A8A90;border-top:1px solid #8A8A90"></div><div class="a" style="left:552px;top:120px;width:689px;height:711px;border-left:1px solid #646464;border-top:1px solid #646464;border-right:1px solid #E4E4E4;border-bottom:1px solid #E4E4E4"></div>
<div class="a" style="left:553px;top:121px;width:686px;height:23px;background:linear-gradient(#FFFFFF 0,#FFFFFF 35%,#F6F7F9 35%,#EEEFF2);border-bottom:1px solid #D5D5D5"></div><div class="a" style="left:652px;top:121px;width:1px;height:22px;background:#E4E4E4"></div><div class="a" style="left:752px;top:121px;width:1px;height:22px;background:#E4E4E4"></div><div class="t" style="left:558px;top:126px">Name</div><div class="t" style="left:658px;top:126px">Beschreibung</div><div class="a" style="left:553px;top:164px;width:200px;height:18px;background:#F8F8F8"></div><div class="a" style="left:553px;top:163px;width:686px;height:1px;background:#F0F0F0"></div><div class="a" style="left:553px;top:182px;width:686px;height:1px;background:#F0F0F0"></div><div class="a" style="left:553px;top:201px;width:686px;height:1px;background:#F0F0F0"></div><div class="a" style="left:553px;top:220px;width:686px;height:1px;background:#F0F0F0"></div><div class="a" style="left:553px;top:239px;width:686px;height:1px;background:#F0F0F0"></div><div class="a" style="left:553px;top:258px;width:686px;height:1px;background:#F0F0F0"></div><div class="a" style="left:553px;top:277px;width:686px;height:1px;background:#F0F0F0"></div><div class="a" style="left:553px;top:296px;width:686px;height:1px;background:#F0F0F0"></div><div class="a" style="left:553px;top:315px;width:686px;height:1px;background:#F0F0F0"></div><div class="a" style="left:553px;top:334px;width:686px;height:1px;background:#F0F0F0"></div><div class="a" style="left:553px;top:353px;width:686px;height:1px;background:#F0F0F0"></div><div class="a" style="left:553px;top:372px;width:686px;height:1px;background:#F0F0F0"></div><div class="a" style="left:553px;top:391px;width:686px;height:1px;background:#F0F0F0"></div><div class="a" style="left:553px;top:410px;width:686px;height:1px;background:#F0F0F0"></div><div class="a" style="left:553px;top:429px;width:686px;height:1px;background:#F0F0F0"></div><div class="a" style="left:553px;top:448px;width:686px;height:1px;background:#F0F0F0"></div><div class="a" style="left:553px;top:467px;width:686px;height:1px;background:#F0F0F0"></div><div class="a" style="left:553px;top:486px;width:686px;height:1px;background:#F0F0F0"></div><div class="a" style="left:553px;top:505px;width:686px;height:1px;background:#F0F0F0"></div><div class="a" style="left:553px;top:524px;width:686px;height:1px;background:#F0F0F0"></div><div class="a" style="left:553px;top:543px;width:686px;height:1px;background:#F0F0F0"></div><div class="a" style="left:553px;top:562px;width:686px;height:1px;background:#F0F0F0"></div><div class="a" style="left:553px;top:581px;width:686px;height:1px;background:#F0F0F0"></div><div class="a" style="left:553px;top:600px;width:686px;height:1px;background:#F0F0F0"></div><div class="a" style="left:553px;top:619px;width:686px;height:1px;background:#F0F0F0"></div><div class="a" style="left:553px;top:638px;width:686px;height:1px;background:#F0F0F0"></div><div class="a" style="left:553px;top:657px;width:686px;height:1px;background:#F0F0F0"></div><div class="a" style="left:553px;top:676px;width:686px;height:1px;background:#F0F0F0"></div><div class="a" style="left:553px;top:695px;width:686px;height:1px;background:#F0F0F0"></div><div class="a" style="left:553px;top:714px;width:686px;height:1px;background:#F0F0F0"></div><div class="a" style="left:553px;top:733px;width:686px;height:1px;background:#F0F0F0"></div><div class="a" style="left:553px;top:752px;width:686px;height:1px;background:#F0F0F0"></div><div class="a" style="left:553px;top:771px;width:686px;height:1px;background:#F0F0F0"></div><div class="a" style="left:553px;top:790px;width:686px;height:1px;background:#F0F0F0"></div><div class="a" style="left:553px;top:809px;width:686px;height:1px;background:#F0F0F0"></div><div class="a" style="left:553px;top:828px;width:686px;height:1px;background:#F0F0F0"></div><div class="a" style="left:653px;top:144px;width:1px;height:686px;background:#F0F0F0"></div><div class="a" style="left:753px;top:144px;width:1px;height:686px;background:#F0F0F0"></div><div class="t" style="left:558px;top:148px">136/137 Techn....</div><div class="t" style="left:659px;top:148px">Dipl.Techniker...</div><div class="t" style="left:558px;top:167px">136/137 Techn....</div><div class="t" style="left:659px;top:167px">Dipl. Techniker...</div><div class="a" style="left:557px;top:183px;width:96px;height:18px;background:#3399FF"></div><div class="a" style="left:654px;top:183px;width:98px;height:18px;background:#3399FF"></div><div class="t" style="left:559px;top:186px;color:#fff">FDT Techn.Text...</div><div class="t" style="left:659px;top:186px;color:#fff">Dipl. Techniker...</div>

<!-- MAKROS PANEL -->
<div class="phdr" style="left:546px;top:841px;width:701px"><div class="t fx" style="transform:scaleX(0.955)">Leistungsnachweis Makros</div><div class="ptri" style="left:670px"></div><div class="px" style="left:687px"></div></div>
<div class="a" style="left:546px;top:860px;width:701px;height:297px;background:#fff;border-left:1px solid #EFEFEF"></div>
<div class="a" style="left:546px;top:860px;width:701px;height:1px;background:#EEF0FA"></div>
<div class="ptb" style="left:550px;top:865px;width:693px;height:23px"></div>
<div class="box" style="left:550px;top:888px;width:343px;height:267px;border-color:#555"></div>
<div class="a" style="left:551px;top:889px;width:341px;height:23px;background:linear-gradient(#FFFFFF 0,#FFFFFF 35%,#F6F7F9 35%,#EEEFF2);border-bottom:1px solid #D5D5D5"></div><div class="a" style="left:650px;top:890px;width:1px;height:21px;background:#E4E4E4"></div><div class="a" style="left:651px;top:912px;width:1px;height:226px;background:#F0F0F0"></div><div class="a" style="left:700px;top:890px;width:1px;height:21px;background:#E4E4E4"></div><div class="a" style="left:701px;top:912px;width:1px;height:226px;background:#F0F0F0"></div><div class="a" style="left:800px;top:890px;width:1px;height:21px;background:#E4E4E4"></div><div class="a" style="left:801px;top:912px;width:1px;height:226px;background:#F0F0F0"></div><div class="a" style="left:551px;top:931px;width:341px;height:1px;background:#F0F0F0"></div><div class="a" style="left:551px;top:950px;width:341px;height:1px;background:#F0F0F0"></div><div class="a" style="left:551px;top:969px;width:341px;height:1px;background:#F0F0F0"></div><div class="a" style="left:551px;top:988px;width:341px;height:1px;background:#F0F0F0"></div><div class="a" style="left:551px;top:1007px;width:341px;height:1px;background:#F0F0F0"></div><div class="a" style="left:551px;top:1026px;width:341px;height:1px;background:#F0F0F0"></div><div class="a" style="left:551px;top:1045px;width:341px;height:1px;background:#F0F0F0"></div><div class="a" style="left:551px;top:1064px;width:341px;height:1px;background:#F0F0F0"></div><div class="a" style="left:551px;top:1083px;width:341px;height:1px;background:#F0F0F0"></div><div class="a" style="left:551px;top:1102px;width:341px;height:1px;background:#F0F0F0"></div><div class="a" style="left:551px;top:1121px;width:341px;height:1px;background:#F0F0F0"></div><div class="t" style="left:556px;top:894px">Name</div><div class="t" style="left:655px;top:894px">Index</div><div class="t" style="left:706px;top:894px">Autor</div><div class="t" style="left:806px;top:894px">Code</div><div class="hsb" style="left:551px;top:1138px;width:341px"><div class="la" style="left:6px"></div><div class="thumb" style="left:18px;width:161px"><div class="grip3" style="left:76px"></div></div><div class="ra" style="left:331px"></div></div><div class="a" style="left:894px;top:889px;width:4px;height:265px;border:1px solid #C8C8D8;border-right:none;background:#fff"></div><div class="a" style="left:556px;top:876px;width:14px;height:2px;background:#9C9C9C"></div><div class="a" style="left:562px;top:871px;width:2px;height:12px;background:#9C9C9C"></div><div class="a" style="left:578px;top:875px;width:14px;height:2px;background:#9C9C9C"></div><div class="a" style="left:600px;top:869px;width:1px;height:17px;background:#D0D0D8"></div><svg class="a" style="left:608px;top:870px" width="15" height="14" viewBox="0 0 15 14"><path d="M0.5 0.5 L14 0.5 L14 13 L1.5 13 L0.5 12 Z" fill="#9C9C9C"/><rect x="3" y="2" width="8.5" height="4" fill="#F4F4F6"/><path d="M5 12 L7 10 L10.5 10 L8.5 12 Z" fill="#E0E0E6"/></svg>
<div class="a" style="left:899px;top:888px;width:344px;height:250px;background:#fff"></div>
<div class="a" style="left:899px;top:888px;width:32px;height:250px;background:#F0F0F0"></div>
<div class="a" style="left:931px;top:888px;width:10px;height:250px;background:repeating-conic-gradient(#F4F4F4 0 25%,#E6E6E6 0 50%) 0 0/2px 2px"></div>
<div class="t" style="left:921px;top:889px;font-family:'Liberation Mono';font-size:11px">1</div>
<div class="hsb" style="left:899px;top:1138px;width:344px"><div class="la" style="left:6px"></div><div class="thumb" style="left:18px;width:44px"><div class="grip3" style="left:18px"></div></div><div class="ra" style="left:334px"></div></div>
<div class="a" style="left:546px;top:1157px;width:701px;height:1px;background:#A0A0A0"></div>
<div class="tab" style="left:548px;top:1158px;width:75px"><div class="t">Dokumente</div></div>
<div class="tab" style="left:622px;top:1158px;width:44px"><div class="t">Bilder</div></div>
<div class="tab" style="left:665px;top:1158px;width:81px"><div class="t">Kommentare</div></div>
<div class="tab act" style="left:745px;top:1157px;width:154px"><div class="t" style="top:5px">Leistungsnachweis Makros</div></div>

<!-- DETAILS PANEL -->
<div class="phdr" style="left:1251px;top:95px;width:349px"><div class="t">Details</div><div class="ptri" style="left:318px"></div><div class="px" style="left:335px"></div></div>
<div class="a" style="left:1251px;top:114px;width:349px;height:1066px;background:#EFF1FB"></div>
<div class="a" style="left:1251px;top:115px;width:349px;height:23px;border:1px solid #707070;border-radius:3px;background:linear-gradient(#F2F2F2,#EBEBEB 45%,#DDDDDD 50%,#CFCFCF);box-shadow:inset 0 0 0 1px #fff"><div class="t" style="left:4px;top:4px">Dokumentendaten</div><div class="a" style="right:4px;top:9px;border-left:4px solid transparent;border-right:4px solid transparent;border-top:4px solid #000"></div></div>
<div class="ptb" style="left:1251px;top:139px;width:349px;height:22px"></div>
<svg class="a" style="left:1256px;top:142px" width="16" height="16"><use href="#tcat" width="16" height="16"/></svg><svg class="a" style="left:1278px;top:142px" width="16" height="16"><use href="#taz" width="16" height="16"/></svg><svg class="a" style="left:1308px;top:142px" width="16" height="16"><use href="#trefr" width="16" height="16"/></svg><svg class="a" style="left:1330px;top:142px" width="16" height="16"><use href="#tsave" width="16" height="16"/></svg><svg class="a" style="left:1352px;top:142px" width="16" height="16"><use href="#tedit" width="16" height="16"/></svg><svg class="a" style="left:1374px;top:142px" width="16" height="16"><use href="#tdoc" width="16" height="16"/></svg><svg class="a" style="left:1396px;top:142px" width="16" height="16"><use href="#tcopy" width="16" height="16"/></svg><svg class="a" style="left:1426px;top:142px" width="16" height="16"><use href="#tx" width="16" height="16"/></svg><div class="a" style="left:1301px;top:142px;width:1px;height:17px;background:#B4B6C8"></div><div class="a" style="left:1419px;top:142px;width:1px;height:17px;background:#B4B6C8"></div>
<div class="a" style="left:1251px;top:161px;width:349px;height:955px;background:#fff"></div>
<div class="a" style="left:1425px;top:408px;width:1px;height:708px;background:#EFEFEF"></div>
<div class="a" style="left:1251px;top:180px;width:19px;height:209px;background:#F0F0F0"></div><div class="pcat" style="top:161px"><div class="exp"></div><div class="t">Reglement</div></div><div class="prow" style="top:180px"><div class="a" style="left:155px;top:0;width:1px;height:19px;background:#EFEFEF"></div><div class="n">Name</div><div class="v">FDT Techn.Textil v15</div></div><div class="prow" style="top:199px"><div class="a" style="left:155px;top:0;width:1px;height:19px;background:#EFEFEF"></div><div class="n">Beschreibung</div><div class="v">Dipl. Techniker/in HF Textil F...</div></div><div class="prow" style="top:218px"><div class="a" style="left:155px;top:0;width:1px;height:19px;background:#EFEFEF"></div><div class="n d">Globale Funktionen</div><div class="v d">&lt;Text&gt;</div></div><div class="prow" style="top:237px"><div class="a" style="left:155px;top:0;width:1px;height:19px;background:#EFEFEF"></div><div class="n d">Lehrgang</div><div class="v d">Dipl.Techniker HF Textil</div></div><div class="pcat" style="top:256px"><div class="exp"></div><div class="t">Information</div></div><div class="prow" style="top:275px"><div class="a" style="left:155px;top:0;width:1px;height:19px;background:#EFEFEF"></div><div class="n">Datensatz</div><div class="v">24</div></div><div class="prow" style="top:294px"><div class="a" style="left:155px;top:0;width:1px;height:19px;background:#EFEFEF"></div><div class="n">Erstellt</div><div class="v"><span style="display:inline-block;transform:scaleX(0.905);transform-origin:0 0">29.10.2014 13:59:37</span></div></div><div class="prow" style="top:313px"><div class="a" style="left:155px;top:0;width:1px;height:19px;background:#EFEFEF"></div><div class="n">Erstellt von</div><div class="v">sa</div></div><div class="prow" style="top:332px"><div class="a" style="left:155px;top:0;width:1px;height:19px;background:#EFEFEF"></div><div class="n">Geändert</div><div class="v"><span style="display:inline-block;transform:scaleX(0.905);transform-origin:0 0">18.11.2015 09:05:48</span></div></div><div class="prow" style="top:351px"><div class="a" style="left:155px;top:0;width:1px;height:19px;background:#EFEFEF"></div><div class="n">Aktualisiert von</div><div class="v">sa</div></div><div class="prow" style="top:370px"><div class="a" style="left:155px;top:0;width:1px;height:19px;background:#EFEFEF"></div><div class="n d">Verbergen</div><div class="v d">Nein</div></div><div class="pcat" style="top:389px"><div class="exp p"></div><div class="t">Benutzerdefinierte Felder</div></div>
<div class="a" style="left:1251px;top:1116px;width:349px;height:64px;background:#F0F0F0"></div>
<div class="a" style="left:1252px;top:1120px;width:347px;height:59px;border:1px solid #A0A0A0;background:#F0F0F0"></div>

<!-- STATUS BAR -->
<div class="a" style="left:250px;top:1181px;width:1350px;height:1px;background:#A0A0A0"></div>
<div class="a" style="left:0;top:1182px;width:1600px;height:18px;background:#F0EEEC;border-top:1px solid #fff"></div>
<div class="t fx" style="left:4px;top:1186px;transform:scaleX(0.915)">For Help, press F1</div>
<div class="t fx" style="left:1489px;top:1185px;color:#6D6D6D;font-size:11px;transform:scaleX(0.86)">REC</div>
<div class="a" style="left:1510px;top:1183px;width:1px;height:16px;background:#D4D2D0"></div>
<div class="t fx" style="left:1515px;top:1185px;color:#6D6D6D;font-size:11px;transform:scaleX(0.9)">CAP</div>
<div class="a" style="left:1536px;top:1183px;width:1px;height:16px;background:#D4D2D0"></div>
<div class="t fx" style="left:1541px;top:1185px;font-size:11px;transform:scaleX(1.0)">NUM</div>
<div class="a" style="left:1568px;top:1183px;width:1px;height:16px;background:#D4D2D0"></div>
<div class="t fx" style="left:1573px;top:1185px;color:#6D6D6D;font-size:11px;transform:scaleX(0.84)">SCRL</div>
<div class="a" style="left:1599px;top:1183px;width:1px;height:16px;background:#D4D2D0"></div>

<svg class="a" style="left:5px;top:814px" width="24" height="24"><use href="#nfold" width="24" height="24"/></svg><svg class="a" style="left:5px;top:845px" width="24" height="24"><use href="#nausw" width="24" height="24"/></svg><svg class="a" style="left:5px;top:876px" width="24" height="24"><use href="#nlohn" width="24" height="24"/></svg><svg class="a" style="left:5px;top:907px" width="24" height="24"><use href="#nfakt" width="24" height="24"/></svg><svg class="a" style="left:5px;top:938px" width="24" height="24"><use href="#npers" width="24" height="24"/></svg><svg class="a" style="left:5px;top:969px" width="24" height="24"><use href="#nqual" width="24" height="24"/></svg><svg class="a" style="left:5px;top:1000px" width="24" height="24"><use href="#nstund" width="24" height="24"/></svg><svg class="a" style="left:5px;top:1031px" width="24" height="24"><use href="#ninfo" width="24" height="24"/></svg><svg class="a" style="left:5px;top:1062px" width="24" height="24"><use href="#nlohn" width="24" height="24"/></svg><svg class="a" style="left:5px;top:1093px" width="24" height="24"><use href="#nverz" width="24" height="24"/></svg><svg class="a" style="left:5px;top:1124px" width="24" height="24"><use href="#nkal" width="24" height="24"/></svg></body></html>
